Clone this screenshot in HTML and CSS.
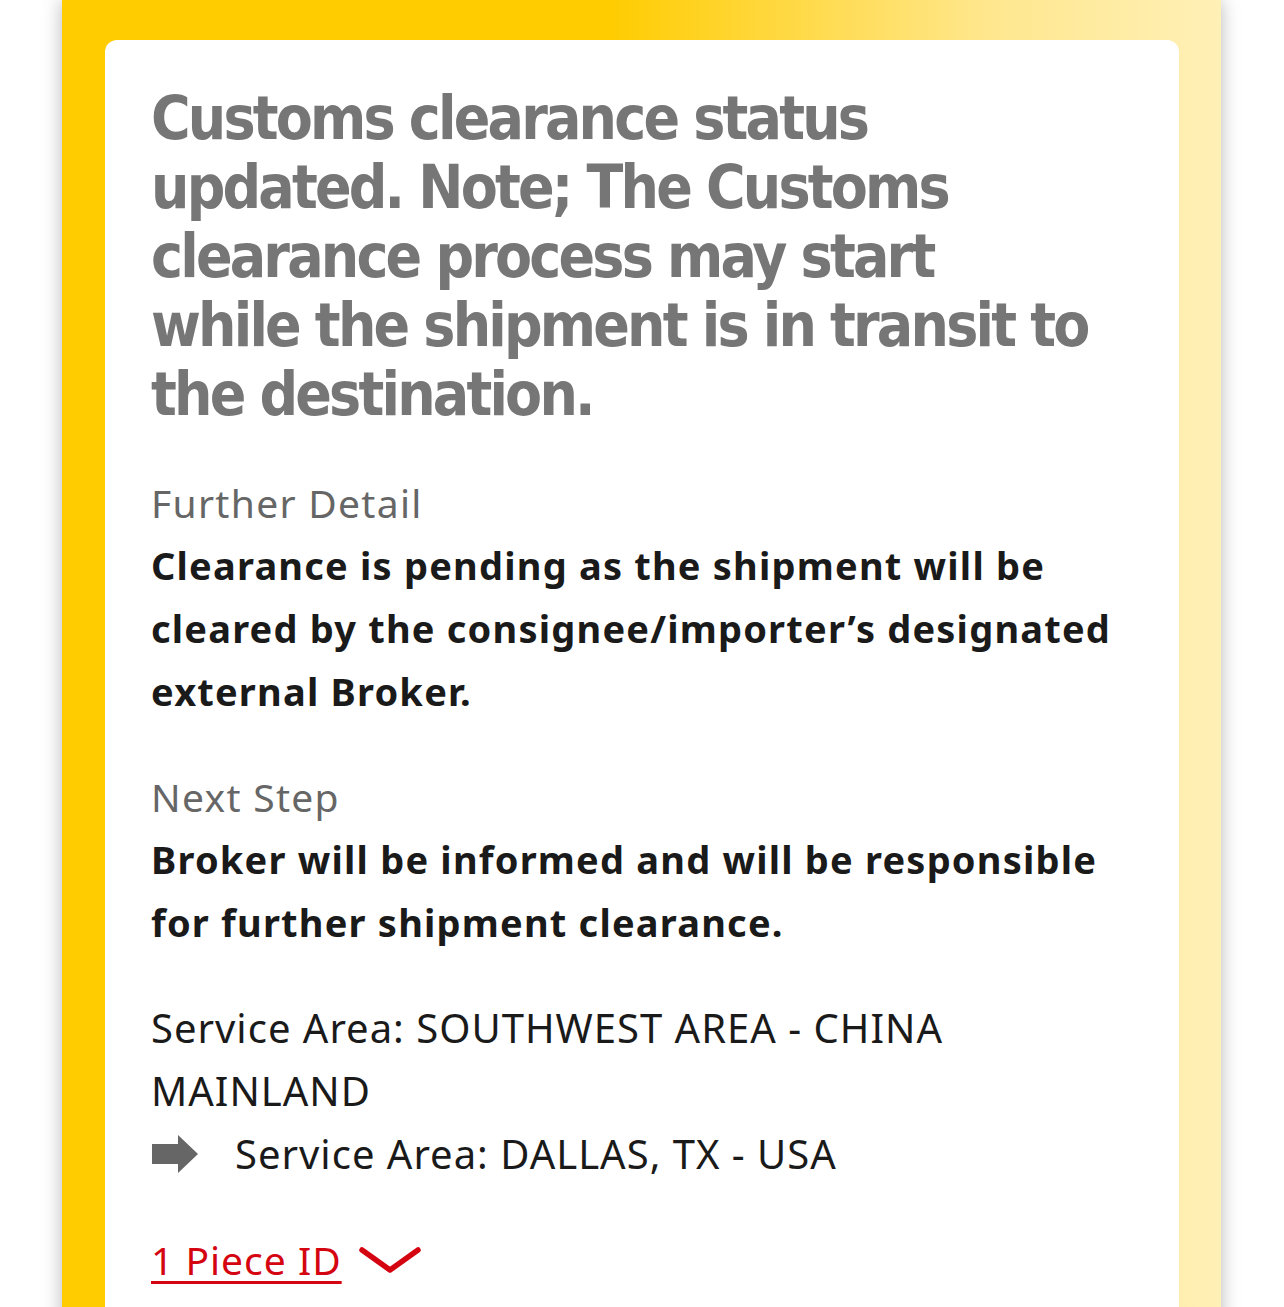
FILE: index.html
```html
<!DOCTYPE html>
<html lang="en">
<head>
<meta charset="utf-8">
<title>Shipment event</title>
<link rel="stylesheet" href="styles.css">
</head>
<body>
<div class="panel">
  <div class="card">
    <h2 class="headline">Customs clearance status updated. Note; The Customs clearance process may start while the shipment is in transit to the destination.</h2>
    <div class="block">
      <div class="label">Further Detail</div>
      <p class="value">Clearance is pending as the shipment will be cleared by the consignee/importer’s designated external Broker.</p>
    </div>
    <div class="block">
      <div class="label">Next Step</div>
      <p class="value">Broker will be informed and will be responsible for further shipment clearance.</p>
    </div>
    <div class="route">
      <p class="area">Service Area: SOUTHWEST AREA - CHINA MAINLAND</p>
      <p class="area dest">
        <svg class="arrow" width="46" height="38" viewBox="0 0 46 38" aria-hidden="true"><path d="M0 9 H26 V0 L46 19 L26 38 V29 H0 Z" fill="#666"/></svg>
        <span>Service Area: DALLAS, TX - USA</span>
      </p>
    </div>
    <a class="pieces" href="#">
      <span class="pieces-text">1 Piece ID</span>
      <svg class="chev" width="62" height="30" viewBox="0 0 62 30" aria-hidden="true"><path d="M3 5 L31 25 L59 5" fill="none" stroke="#d40511" stroke-width="5.5" stroke-linecap="round" stroke-linejoin="round"/></svg>
    </a>
  </div>
</div>
</body>
</html>
```

FILE: styles.css
```css
html, body {
  margin: 0;
  padding: 0;
  background: #fff;
}
body {
  font-family: "Noto Sans", "Open Sans", sans-serif;
  height: 1307px;
  overflow: hidden;
}
.panel {
  margin: 0 63px 0 62px;
  min-height: 1307px;
  box-sizing: border-box;
  padding: 40px 42px 0 43px;
  background: linear-gradient(90deg, #ffcc00 0%, #ffcc00 47%, #ffe78e 80%, #fff0b6 100%);
  box-shadow: 0 0 18px rgba(0, 0, 0, 0.28);
}
.card {
  background: #fff;
  border-radius: 12px 12px 0 0;
  padding: 44px 46px 40px 46px;
  min-height: 1267px;
  box-sizing: border-box;
}
.headline {
  max-width: 943px;
  margin: 0 0 42px 0;
  font-family: "DejaVu Sans Condensed", "DejaVu Sans", sans-serif;
  font-stretch: condensed;
  font-weight: 700;
  font-size: 60px;
  line-height: 69px;
  color: #767676;
  letter-spacing: -2.8px;
}
.block {
  margin-bottom: 42px;
}
.label {
  font-size: 39px;
  line-height: 63px;
  letter-spacing: 1.3px;
  color: #666;
}
.value {
  margin: 0;
  font-size: 38px;
  line-height: 63px;
  font-weight: 700;
  letter-spacing: 1.2px;
  color: #1a1a1a;
}
.route {
  margin: 0 0 43px 0;
}
.area {
  margin: 0;
  font-size: 40px;
  line-height: 63px;
  letter-spacing: 1px;
  color: #1a1a1a;
}
.dest {
  display: flex;
  align-items: center;
  gap: 37px;
}
.arrow {
  flex: none;
  margin-left: 1px;
}
.pieces {
  display: inline-flex;
  align-items: center;
  gap: 17px;
  color: #d40511;
  text-decoration: none;
  font-size: 39px;
  line-height: 63px;
  letter-spacing: 1px;
}
.pieces-text {
  text-decoration: underline;
  text-decoration-thickness: 3px;
  text-underline-offset: 6px;
}
.chev {
  flex: none;
}
```
